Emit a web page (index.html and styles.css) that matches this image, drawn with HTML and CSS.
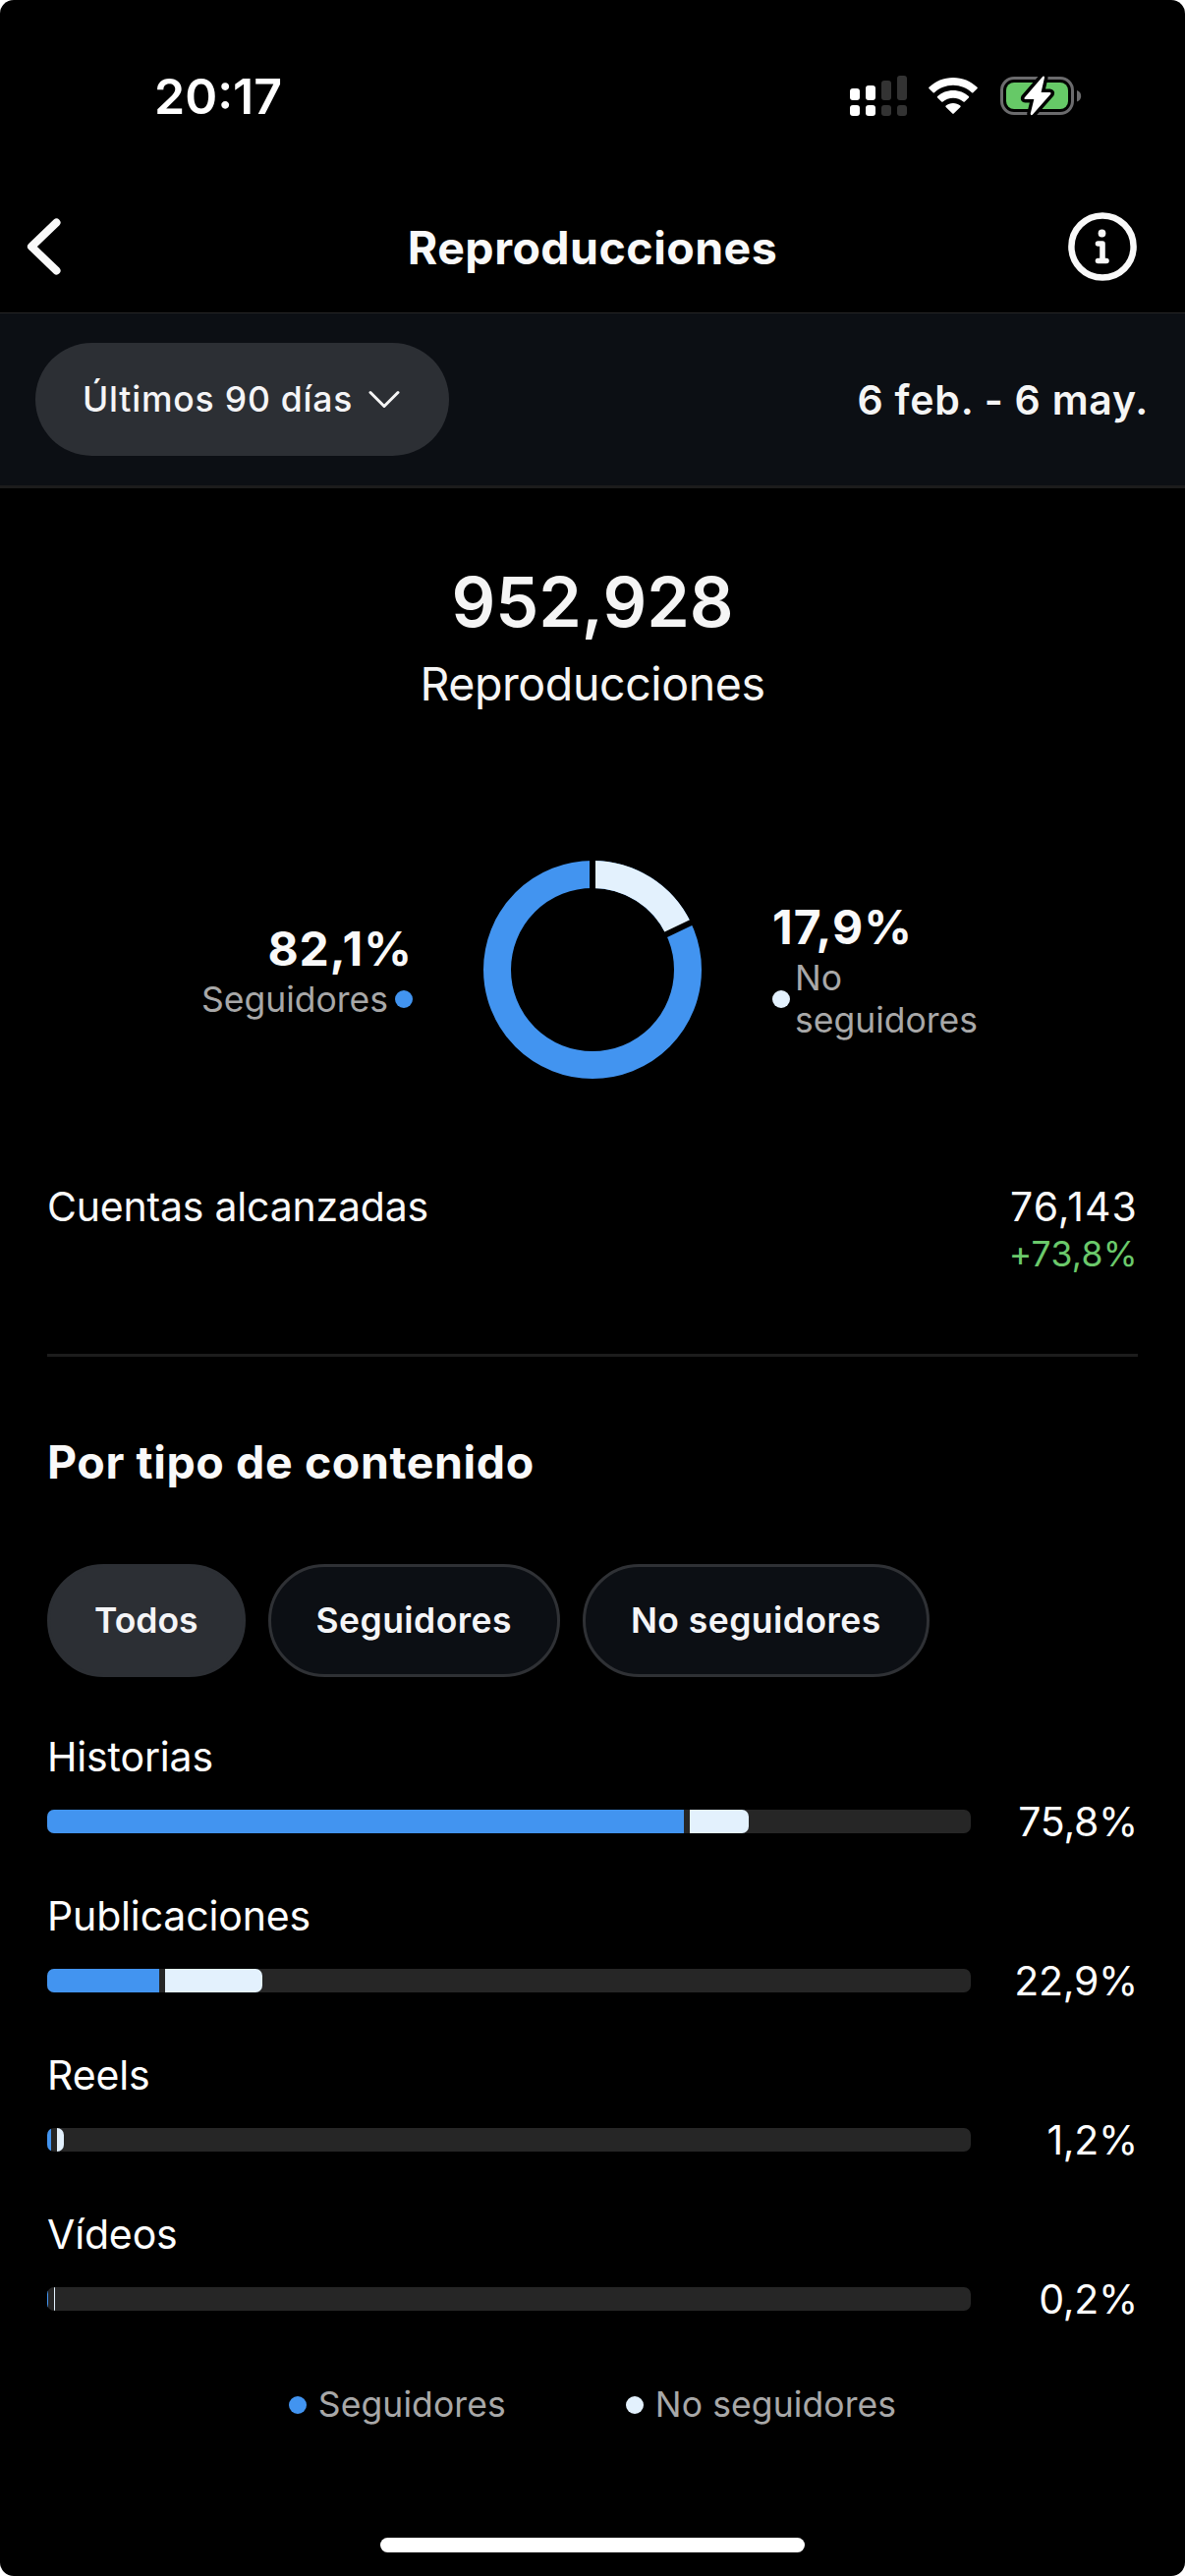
FILE: index.html
```html
<!DOCTYPE html>
<html lang="es">
  <head>
    <meta charset="utf-8">
    <title>Reproducciones</title>
    <link rel="stylesheet" href="styles.css">
  </head>
  <body>
    <div class="screen">
      <div class="status-bar">
        <div class="time">20:17</div>
        <div class="status-icons">
          <svg class="signal" width="58" height="42" viewBox="0 0 58 42">
            <g fill="#fff">
              <rect x="0" y="13" width="10" height="12" rx="3"/>
              <rect x="0" y="30" width="10" height="11" rx="3"/>
              <rect x="16" y="10" width="10" height="15" rx="3"/>
              <rect x="16" y="30" width="10" height="11" rx="3"/>
            </g>
            <g fill="#333">
              <rect x="32" y="5" width="10" height="20" rx="3"/>
              <rect x="32" y="30" width="10" height="11" rx="3"/>
              <rect x="48" y="0" width="10" height="25" rx="3"/>
              <rect x="48" y="30" width="10" height="11" rx="3"/>
            </g>
          </svg>
          <svg class="wifi" width="50" height="38" viewBox="0 0 50 38">
            <path fill="#fff" d="M25 0C15.500 0 6.900 3.700 0.500 9.800Q-.2 10.500.5 11.200L4.600 15.300Q5.300 15.900 6 15.300C11 10.600 17.700 7.800 25 7.800S39 10.600 44 15.300Q44.700 15.900 45.400 15.300L49.500 11.200Q50.200 10.500 49.500 9.800C43.100 3.700 34.500 0 25 0Z"/>
            <path fill="#fff" d="M25 13C18.900 13 13.300 15.300 9.100 19.100Q8.400 19.800 9.100 20.500L13.200 24.500Q13.900 25.100 14.600 24.500C17.400 22.100 21 20.700 25 20.700S32.600 22.100 35.400 24.500Q36.100 25.100 36.800 24.500L40.900 20.500Q41.600 19.800 40.900 19.100C36.700 15.300 31.100 13 25 13Z"/>
            <path fill="#fff" d="M25 26C22.200 26 19.700 26.900 17.700 28.500Q16.900 29.200 17.600 29.900L24.300 36.600Q25 37.200 25.700 36.600L32.400 29.900Q33.100 29.200 32.300 28.500C30.300 26.900 27.800 26 25 26Z"/>
          </svg>
          <svg class="battery" width="84" height="44" viewBox="0 0 84 44">
            <rect x="2.500" y="3.500" width="72" height="36" rx="12.500" fill="none" stroke="#6b6b6d" stroke-width="3"/>
            <path fill="#6b6b6d" d="M79 16c3 1 4.200 3.200 4.200 5.700s-1.200 4.700-4.200 5.700z"/>
            <rect x="7" y="8" width="63" height="27" rx="8" fill="#66c967"/>
            <path fill="#fff" stroke="#000" stroke-width="7" stroke-linejoin="round" paint-order="stroke" d="M44.300 1.800 25.600 23.400Q24.800 25 26.600 25.100H35.300L31.700 39.800Q32 42 33.800 40.800L52.300 19.700Q53.200 18.100 51.400 18H42.600L46 3.100Q46 .6 44.300 1.800Z"/>
          </svg>
        </div>
      </div>

      <div class="header">
        <svg class="back" width="40" height="64" viewBox="0 0 40 64">
          <path d="M33.500 7.500 8 32l25.500 24.500" fill="none" stroke="#f9f9f9" stroke-width="8" stroke-linecap="round" stroke-linejoin="round"/>
        </svg>
        <h1 class="header-title">Reproducciones</h1>
        <svg class="info" width="70" height="70" viewBox="0 0 70 70">
          <circle cx="35" cy="35" r="31.600" fill="none" stroke="#f9f9f9" stroke-width="6.500"/>
          <circle cx="34.500" cy="21.500" r="3.900" fill="#f9f9f9"/>
          <path d="M30.500 32h4.500v17.500M30.500 49.500h8.500" fill="none" stroke="#f9f9f9" stroke-width="5.600" stroke-linecap="round" stroke-linejoin="round"/>
        </svg>
      </div>

      <div class="filter-bar">
        <div class="period">
          <span>Últimos 90 días</span>
          <svg width="32" height="20" viewBox="0 0 32 20">
            <path d="M2 2.500 16 16.500 30 2.500" fill="none" stroke="#f5f5f5" stroke-width="3" stroke-linecap="round" stroke-linejoin="round"/>
          </svg>
        </div>
        <div class="dates">6 feb. - 6 may.</div>
      </div>

      <div class="summary">
        <div class="total">952,928</div>
        <div class="total-label">Reproducciones</div>
      </div>

      <div class="breakdown">
        <div class="share share-left">
          <div class="share-value">82,1%</div>
          <div class="share-label"><span>Seguidores</span><i class="dot blue"></i></div>
        </div>
        <!-- arcs start at 12 o'clock: 17.9% white, the rest blue -->
        <svg class="donut" width="222" height="222" viewBox="0 0 222 222">
          <g fill="none" stroke-width="28" transform="rotate(-90 111 111)">
            <circle cx="111" cy="111" r="97" stroke="#4294f0"/>
            <circle cx="111" cy="111" r="97" stroke="#e3f1fd" pathLength="100" stroke-dasharray="17.900 82.100"/>
          </g>
          <path d="M111 111V-2M111 111 212.900 62.200" stroke="#000" stroke-width="6"/>
        </svg>
        <div class="share share-right">
          <div class="share-value">17,9%</div>
          <div class="share-label"><i class="dot white"></i><span>No<br>seguidores</span></div>
        </div>
      </div>

      <div class="reach">
        <div class="reach-label">Cuentas alcanzadas</div>
        <div class="reach-numbers">
          <div class="reach-value">76,143</div>
          <div class="reach-change">+73,8%</div>
        </div>
      </div>

      <div class="content-type">
        <h2 class="section-title">Por tipo de contenido</h2>
        <div class="chips">
          <div class="chip active">Todos</div>
          <div class="chip">Seguidores</div>
          <div class="chip">No seguidores</div>
        </div>

        <div class="row">
          <div class="row-label">Historias</div>
          <div class="row-data">
            <div class="track">
              <div class="bar blue" style="width: 648px"></div>
              <div class="bar white" style="width: 60px"></div>
            </div>
            <div class="percent">75,8%</div>
          </div>
        </div>
        <div class="row">
          <div class="row-label">Publicaciones</div>
          <div class="row-data">
            <div class="track">
              <div class="bar blue" style="width: 114px"></div>
              <div class="bar white" style="width: 99px"></div>
            </div>
            <div class="percent">22,9%</div>
          </div>
        </div>
        <div class="row">
          <div class="row-label">Reels</div>
          <div class="row-data">
            <div class="track">
              <div class="bar blue" style="width: 4px"></div>
              <div class="bar white" style="width: 7px"></div>
            </div>
            <div class="percent">1,2%</div>
          </div>
        </div>
        <div class="row">
          <div class="row-label">Vídeos</div>
          <div class="row-data">
            <div class="track">
              <div class="bar blue" style="width: 1px"></div>
              <div class="bar white" style="width: 1px"></div>
            </div>
            <div class="percent">0,2%</div>
          </div>
        </div>
      </div>

      <div class="legend">
        <div class="legend-item"><i class="dot blue"></i>Seguidores</div>
        <div class="legend-item"><i class="dot white"></i>No seguidores</div>
      </div>

      <div class="home-indicator"></div>
    </div>
  </body>
</html>
```
FILE: styles.css
```css
* {
  box-sizing: border-box;
}
body {
  margin: 0;
  background: #fff;
  font-family: Inter, "Liberation Sans", sans-serif;
  color: #f9f9f9;
}
h1, h2 {
  margin: 0;
}
svg {
  display: block;
  flex: none;
}
.screen {
  width: 1206px;
  height: 2622px;
  background: #000;
  border-radius: 14px;
  overflow: hidden;
  white-space: nowrap;
}

/* status bar */
.status-bar {
  display: flex;
  justify-content: space-between;
  align-items: center;
  height: 186px;
  padding: 10px 105px 0 157px;
}
.time {
  font-size: 50px;
  font-weight: 600;
  color: #fff;
}
.status-icons {
  display: flex;
  align-items: center;
}
.wifi {
  margin-left: 22px;
}
.battery {
  margin-left: 22px;
}

/* header */
.header {
  display: flex;
  justify-content: space-between;
  align-items: center;
  height: 133px;
  padding: 0 49px 2px 24px;
  border-bottom: 1px solid #262626;
}
.back {
  margin-right: 55px;
}
.header-title {
  font-size: 46.5px;
  line-height: 60px;
  font-weight: 700;
  letter-spacing: 0.45px;
  margin-top: 2px;
}

/* period and dates */
.filter-bar {
  display: flex;
  justify-content: space-between;
  align-items: center;
  height: 178px;
  padding: 0 37px 0 36px;
  background: #0c0f14;
  border-bottom: 3px solid #1c1c1c;
}
.period {
  display: flex;
  align-items: center;
  justify-content: space-between;
  width: 421px;
  height: 115px;
  padding: 0 50px 0 48px;
  border-radius: 58px;
  background: #2c2f34;
  font-size: 35.5px;
  font-weight: 500;
  letter-spacing: 0.8px;
  color: #f5f5f7;
}
.dates {
  font-size: 41px;
  font-weight: 600;
  letter-spacing: 0.75px;
  color: #f5f5f5;
}

/* total */
.summary {
  padding-top: 74px;
  text-align: center;
  color: #f5f5f5;
}
.total {
  font-size: 70px;
  line-height: 84px;
  font-weight: 600;
}
.total-label {
  margin-top: 11px;
  font-size: 46.5px;
  line-height: 61px;
  letter-spacing: -0.4px;
}

/* donut */
.breakdown {
  display: grid;
  grid-template-columns: 421px 222px 421px;
  column-gap: 71px;
  align-items: center;
  height: 222px;
  margin-top: 149px;
}
.share-value {
  font-size: 48px;
  line-height: 60px;
  font-weight: 700;
  letter-spacing: 1px;
}
.share-label {
  display: flex;
  align-items: center;
  gap: 7px;
  font-size: 35.5px;
  line-height: 43px;
  color: #a8a8a8;
}
.share-left {
  padding-right: 1px;
  text-align: right;
}
.share-left .share-label {
  justify-content: flex-end;
}
.share-right {
  padding-left: 1px;
}
.share-right .share-label {
  gap: 5px;
}
.dot {
  display: block;
  flex: none;
  width: 18px;
  height: 18px;
  border-radius: 50%;
}
.blue {
  background: #4294f0;
}
.white {
  background: #e3f1fd;
}

/* reached accounts */
.reach {
  display: flex;
  justify-content: space-between;
  height: 177px;
  margin: 106px 48px 0;
  border-bottom: 3px solid #1c1c1c;
}
.reach-label, .reach-value {
  font-size: 41px;
  line-height: 48px;
}
.reach-label {
  letter-spacing: -0.2px;
}
.reach-numbers {
  text-align: right;
}
.reach-value {
  letter-spacing: 1.1px;
}
.reach-change {
  font-size: 35.5px;
  line-height: 50px;
  letter-spacing: 0.3px;
  color: #6bc96b;
}

/* content type */
.content-type {
  padding: 77px 48px 0;
}
.section-title {
  font-size: 46.5px;
  line-height: 60px;
  font-weight: 700;
  letter-spacing: 0.6px;
}
.chips {
  display: flex;
  gap: 23px;
  margin: 74px 0 56px;
}
.chip {
  height: 115px;
  padding: 0 46px;
  border: 3px solid #2f3135;
  border-radius: 58px;
  background: #0c0f14;
  font-size: 35.5px;
  line-height: 109px;
  font-weight: 600;
  letter-spacing: 0.45px;
  color: #f5f5f7;
}
.chip.active {
  padding: 0 45px;
  background: #2c2f34;
  border-color: #2c2f34;
  letter-spacing: 0;
}
.row {
  margin-bottom: 46px;
  color: #fff;
}
.row-label {
  font-size: 41px;
  line-height: 50px;
  letter-spacing: -0.15px;
}
.row-data {
  display: flex;
  align-items: center;
  justify-content: space-between;
  height: 50px;
  margin-top: 16px;
}
.track {
  display: flex;
  gap: 6px;
  width: 940px;
  height: 24px;
  border-radius: 7px;
  background: #262626;
  overflow: hidden;
}
.bar.white {
  border-radius: 0 7px 7px 0;
}
.percent {
  font-size: 41px;
  line-height: 50px;
  letter-spacing: -0.3px;
}

/* legend */
.legend {
  display: flex;
  justify-content: center;
  gap: 122px;
  margin-top: 61px;
  font-size: 35.5px;
  line-height: 44px;
  letter-spacing: 0.1px;
  color: #a8a8a8;
}
.legend-item {
  display: flex;
  align-items: center;
  gap: 12px;
}
.home-indicator {
  width: 432px;
  height: 15px;
  margin: 113px auto 0;
  border-radius: 8px;
  background: #fff;
}
```
